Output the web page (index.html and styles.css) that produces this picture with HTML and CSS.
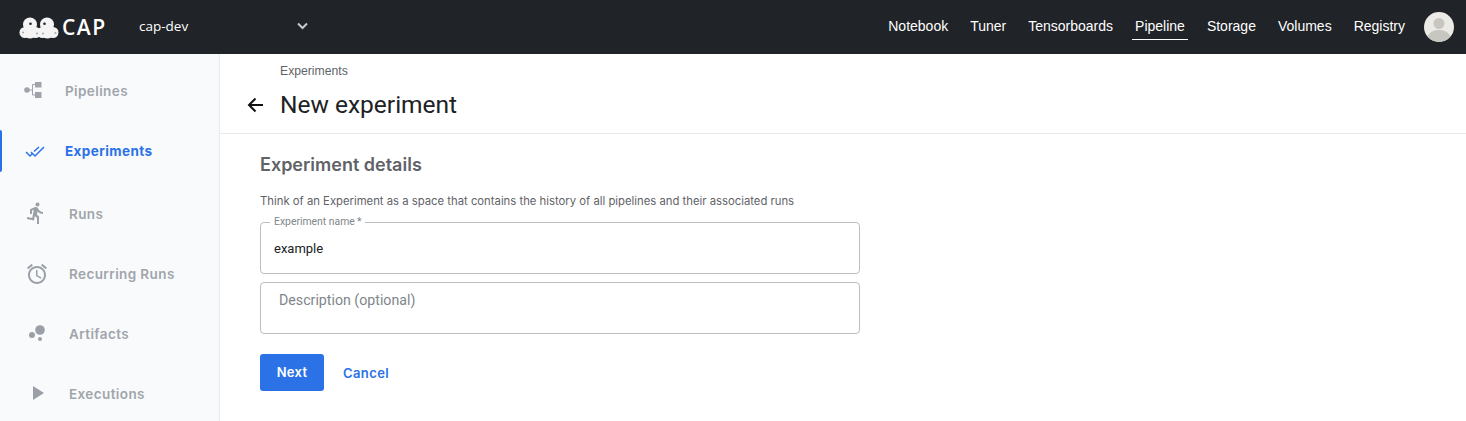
FILE: index.html
```html
<!DOCTYPE html>
<html lang="en">
<head>
  <meta charset="UTF-8">
  <title>New experiment</title>
  <link rel="stylesheet" href="styles.css">
</head>
<body>
  <header class="topbar">
    <div class="brand">
      <svg class="brand-logo" width="40" height="22" viewBox="0 0 40 22">
        <g fill="#f4f4f4">
          <circle cx="11" cy="7.500" r="7"/>
          <circle cx="6" cy="15.500" r="5.500"/>
          <circle cx="16.500" cy="15.500" r="5.500"/>
          <circle cx="11" cy="16" r="5.500"/>
          <circle cx="28" cy="7.500" r="7"/>
          <circle cx="23.500" cy="15.500" r="5.500"/>
          <circle cx="34" cy="15.500" r="5.500"/>
          <circle cx="28.500" cy="16" r="5.500"/>
        </g>
        <g fill="#202327">
          <circle cx="11.500" cy="6.700" r="1.300"/>
          <circle cx="25.500" cy="6.700" r="1.300"/>
        </g>
        <g fill="#a8a8a8">
          <circle cx="4" cy="15.500" r="1"/>
          <circle cx="18" cy="16.500" r="1"/>
          <circle cx="24" cy="16.500" r="1"/>
          <circle cx="36.500" cy="16" r="1"/>
        </g>
      </svg>
      <span class="brand-name">CAP</span>
    </div>
    <div class="namespace">
      <span>cap-dev</span>
      <svg width="13" height="9" viewBox="0 0 13 9" fill="none" stroke="#c9c9c9" stroke-width="2"><path d="M2 1.500l4.500 4.500 4.500-4.500"/></svg>
    </div>
    <nav class="topnav">
      <a>Notebook</a>
      <a>Tuner</a>
      <a>Tensorboards</a>
      <a class="current">Pipeline</a>
      <a>Storage</a>
      <a>Volumes</a>
      <a>Registry</a>
    </nav>
    <svg class="avatar" width="30" height="30" viewBox="0 0 30 30">
      <circle cx="15" cy="15" r="15" fill="#eceae6"/>
      <circle cx="15" cy="11.500" r="5.500" fill="#c8c6c1"/>
      <path d="M3.500 24.500C6 19.500 10 18 15 18s9 1.500 11.500 6.500A15 15 0 0 1 3.500 24.500z" fill="#c8c6c1"/>
    </svg>
  </header>

  <div class="layout">
    <aside class="sidebar">
      <a class="side-item">
        <svg class="side-icon" viewBox="0 0 24 24" fill="#a0a4aa">
          <circle cx="3" cy="11" r="2.800"/>
          <rect x="11" y="3" width="6.500" height="5.500"/>
          <rect x="11" y="13" width="6.500" height="6"/>
          <path d="M3 11h5.500M8.500 5.500V16M8.500 5.500H11M8.500 16H11" fill="none" stroke="#a0a4aa"/>
        </svg>
        <span>Pipelines</span>
      </a>
      <a class="side-item active">
        <svg class="side-icon" viewBox="0 0 24 24" fill="none" stroke="#2b72e6" stroke-width="1.500">
          <path d="M2 13l4 4 2-2M7 13l4 4 9-9M10 12.500L15 8"/>
        </svg>
        <span>Experiments</span>
      </a>
      <a class="side-item wide first-wide">
        <svg class="side-icon" viewBox="0 0 24 24" fill="#9aa0a6">
          <path transform="translate(0 -1)" d="M13.490 5.480c1.100 0 2-.9 2-2s-.9-2-2-2-2 .9-2 2 .9 2 2 2zm-3.600 13.900l1-4.400 2.100 2v6h2v-7.500l-2.100-2 .6-3c1.300 1.500 3.300 2.500 5.500 2.500v-2c-1.900 0-3.500-1-4.300-2.400l-1-1.600c-.4-.6-1-1-1.700-1-.3 0-.5.1-.8.1l-5.200 2.200v4.700h2v-3.400l1.800-.7-1.600 8.100-4.900-1-.4 2 7 1.400z"/>
        </svg>
        <span>Runs</span>
      </a>
      <a class="side-item wide">
        <svg class="side-icon" viewBox="0 0 24 24" fill="#9aa0a6">
          <path transform="translate(1 0)" d="M22 5.720l-4.600-3.860-1.290 1.530 4.600 3.860L22 5.720zM7.880 3.390L6.600 1.860 2 5.710l1.290 1.530 4.590-3.850zM12.500 8H11v6l4.750 2.850.75-1.230-4-2.370V8zM12 4c-4.970 0-9 4.030-9 9s4.030 9 9 9 9-4.030 9-9-4.030-9-9-9zm0 16c-3.870 0-7-3.130-7-7s3.130-7 7-7 7 3.130 7 7-3.130 7-7 7z"/>
        </svg>
        <span>Recurring Runs</span>
      </a>
      <a class="side-item wide">
        <svg class="side-icon" viewBox="0 0 24 24" fill="#9aa0a6">
          <circle cx="16" cy="8" r="4.800"/>
          <circle cx="8" cy="13" r="3"/>
          <circle cx="16" cy="17" r="2"/>
        </svg>
        <span>Artifacts</span>
      </a>
      <a class="side-item wide">
        <svg class="side-icon" viewBox="0 0 24 24" fill="#9aa0a6">
          <path d="M9 4l11 7-11 7z"/>
        </svg>
        <span>Executions</span>
      </a>
    </aside>

    <main class="content">
      <div class="page-head">
        <div class="crumb">Experiments</div>
        <div class="title-row">
          <svg width="16" height="16" viewBox="0 0 16 16" fill="none" stroke="#111" stroke-width="2"><path d="M16 8H2M8.500 1.500L2 8l6.500 6.500"/></svg>
          <h1>New experiment</h1>
        </div>
      </div>

      <form class="details">
        <h2>Experiment details</h2>
        <p class="hint">Think of an Experiment as a space that contains the history of all pipelines and their associated runs</p>
        <fieldset class="field">
          <legend>Experiment name&thinsp;*</legend>
          <span class="value">example</span>
        </fieldset>
        <div class="field empty">Description (optional)</div>
        <div class="actions">
          <button type="button" class="next">Next</button>
          <a class="cancel">Cancel</a>
        </div>
      </form>
    </main>
  </div>
</body>
</html>
```

FILE: styles.css
```css
html, body {
  margin: 0;
  height: 100%;
  overflow: hidden;
}
body {
  font-family: 'Liberation Sans', sans-serif;
  background: #fff;
  color: #202124;
}
.topbar {
  display: flex;
  align-items: center;
  height: 54px;
  background: #202327;
  padding: 0 12px 0 19px;
}
.brand {
  display: flex;
  align-items: center;
  width: 120px;
}
.brand-logo {
  margin-right: 3px;
  margin-top: 2px;
}
.brand-name {
  font-family: 'Open Sans', sans-serif;
  font-size: 21px;
  font-weight: 600;
  letter-spacing: 1.500px;
  color: #fff;
}
.namespace {
  display: flex;
  align-items: center;
  justify-content: space-between;
  width: 170px;
  margin-top: -2px;
  font-family: 'Open Sans', sans-serif;
  font-size: 13.500px;
  color: #fff;
}
.topnav {
  display: flex;
  gap: 16px;
  margin-left: auto;
  margin-right: 16px;
  margin-top: -2px;
}
.topnav a {
  padding: 0 3px;
  height: 26px;
  line-height: 26px;
  font-size: 14px;
  color: #fff;
}
.topnav a.current {
  border-bottom: 1px solid #fff;
}
.avatar {
  display: block;
}

.layout {
  display: flex;
  height: 367px;
}
.sidebar {
  width: 219px;
  flex: none;
  padding-top: 7px;
  background: #f8fafc;
  border-right: 1px solid #e8eaed;
  font-family: 'Inter', sans-serif;
  font-size: 13.500px;
  letter-spacing: .4px;
  font-weight: 600;
  color: #a1a5ab;
}
.side-item {
  display: flex;
  align-items: center;
  gap: 17px;
  height: 60px;
  padding-left: 24px;
  position: relative;
}
.side-icon {
  width: 24px;
  height: 24px;
  flex: none;
}
.side-item.wide {
  gap: 21px;
}
.side-item.first-wide {
  margin-top: 3px;
}
.side-item.active {
  color: #2b72e6;
  font-weight: 700;
}
.side-item.active::before {
  content: "";
  position: absolute;
  left: 0;
  top: 9px;
  width: 2px;
  height: 42px;
  background: #2b72e6;
  border-radius: 0 2px 2px 0;
}

.content {
  flex: 1;
}
.page-head {
  height: 80px;
  box-sizing: border-box;
  border-bottom: 1px solid #e8eaed;
  padding: 10px 0 0 27px;
}
.crumb {
  margin-left: 33px;
  font-size: 12.200px;
  line-height: 14px;
  color: #5f6368;
}
.title-row {
  display: flex;
  align-items: center;
  gap: 17px;
  margin-top: 9px;
}
h1 {
  margin: 0;
  font-family: 'Roboto', sans-serif;
  font-size: 24.500px;
  font-weight: 400;
  line-height: 36px;
  color: #202124;
}
.details {
  width: 600px;
  margin-left: 40px;
}
h2 {
  margin: 0;
  padding-top: 20px;
  font-family: 'Inter', sans-serif;
  font-size: 18px;
  line-height: 22px;
  font-weight: 600;
  color: #5f6368;
}
.hint {
  margin: 18px 0 0;
  font-family: 'Inter', sans-serif;
  font-size: 11.300px;
  line-height: 14px;
  color: #5f6368;
}
.field {
  box-sizing: border-box;
  margin: 0;
  border: 1px solid #bdbdbd;
  border-radius: 4px;
  height: 52px;
  font-family: 'Roboto', sans-serif;
  font-size: 13px;
}
fieldset.field {
  height: 58px;
  padding: 0 13px;
  margin-bottom: 8px;
  margin-top: 8px;
}
legend {
  padding: 0 4px;
  margin-left: -4px;
  font-size: 10.400px;
  line-height: 12px;
  color: #80868b;
}
.value {
  display: block;
  margin-top: 12px;
  line-height: 18px;
  color: #202124;
}
.field.empty {
  padding: 8px 18px;
  font-size: 14.200px;
  line-height: 18px;
  color: #80868b;
}
.actions {
  display: flex;
  align-items: center;
  gap: 19px;
  margin-top: 20px;
}
.next {
  width: 64px;
  height: 37px;
  padding: 0 0 2px;
  border: 0;
  border-radius: 3px;
  background: #2b72e6;
  color: #fff;
  font-family: 'Inter', sans-serif;
  font-size: 13px;
  font-weight: 600;
  letter-spacing: .3px;
}
.cancel {
  font-family: 'Inter', sans-serif;
  font-size: 13px;
  font-weight: 600;
  letter-spacing: .4px;
  color: #2b72e6;
}
```
